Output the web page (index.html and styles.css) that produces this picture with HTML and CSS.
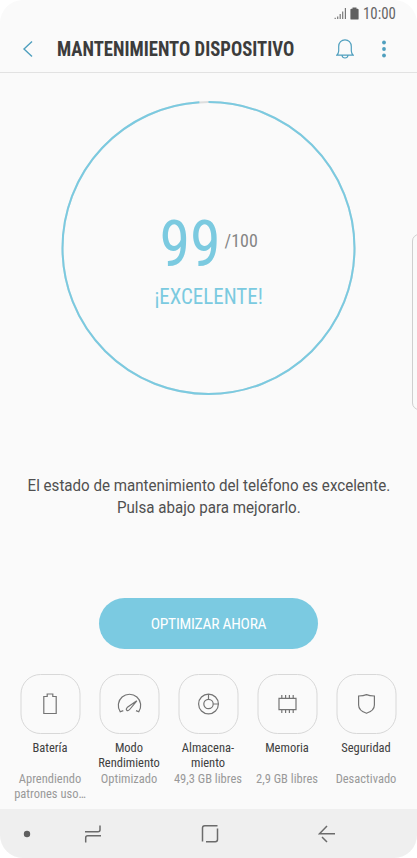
FILE: index.html
```html
<!DOCTYPE html>
<html lang="es">
<head>
<meta charset="utf-8">
<title>Mantenimiento dispositivo</title>
<link rel="stylesheet" href="styles.css">
</head>
<body>
<div class="phone">
  <div class="edge-handle"></div>
  <div class="status">
    <svg class="signal" width="13" height="13" viewBox="0 0 13 13"><path d="M1.2 12v-1.2M3.7 12V9.5M6.2 12V7M8.7 12V4.500M11.400 12V1"/></svg>
    <svg class="cell" width="9" height="13" viewBox="0 0 9 13"><path d="M1.300 1.800H2.500V.4h4v1.400h1.200q.9 0 .9.900v9q0 .9-.9.900H1.300q-.9 0-.9-.9v-9q0-.9.900-.9z"/></svg>
    <span class="time">10:00</span>
  </div>
  <header class="bar">
    <svg class="back" width="12" height="18" viewBox="0 0 12 18"><path d="M10 1.500 2 9l8 7.500"/></svg>
    <h1>MANTENIMIENTO DISPOSITIVO</h1>
    <svg class="bell" width="18" height="20" viewBox="0 0 18 20"><path d="M.8 16.200q1.700-1.500 1.900-4.200V7.500C2.700 3.300 5.500.9 9 .9s6.300 2.400 6.300 6.600V12q.2 2.700 1.900 4.200zM6 16.500q.4 2.500 3 2.500t3-2.500"/></svg>
    <svg class="more" width="6" height="18" viewBox="0 0 6 18"><circle cx="3" cy="2.500" r="1.900"/><circle cx="3" cy="9" r="1.900"/><circle cx="3" cy="15.500" r="1.900"/></svg>
  </header>
  <main>
    <section class="score">
      <svg class="ring" width="295" height="296" viewBox="0 0 295 296"><circle class="track" cx="147.500" cy="148" r="146"/><circle class="value" cx="147.500" cy="148" r="146" pathLength="100" stroke-dasharray="99 1" transform="rotate(-90 147.500 148)"/></svg>
      <div class="points"><span class="number">99</span><span class="total">/100</span></div>
      <div class="rating">¡EXCELENTE!</div>
    </section>
    <p class="summary">El estado de mantenimiento del teléfono es excelente.<br>Pulsa abajo para mejorarlo.</p>
    <button class="optimize">OPTIMIZAR AHORA</button>
    <section class="tiles">
      <div class="tile">
        <div class="icon"><svg width="28" height="28" viewBox="0 0 28 28"><path d="M7.300 6.500h3.400V4h5.600v2.500h3.400v17H7.300z"/></svg></div>
        <div class="name">Batería</div>
        <div class="info">Aprendiendo<br>patrones uso…</div>
      </div>
      <div class="tile">
        <div class="icon"><svg width="28" height="28" viewBox="0 0 28 28"><path d="M7.800 20.600 4.700 21.700A11.200 11.200 0 1 1 23.300 21.700L20.500 20.600M21.300 10.800 12.300 16.900q-2.200 2-1.100 3.300 1.500 1.200 3.400-1.200z"/></svg></div>
        <div class="name">Modo<br>Rendimiento</div>
        <div class="info">Optimizado</div>
      </div>
      <div class="tile">
        <div class="icon"><svg width="28" height="28" viewBox="0 0 28 28"><circle cx="14" cy="14" r="9.900"/><circle cx="14" cy="14" r="4.700"/><path d="M14 4v5.300M18.700 14H24"/></svg></div>
        <div class="name">Almacena-<br>miento</div>
        <div class="info">49,3 GB libres</div>
      </div>
      <div class="tile">
        <div class="icon"><svg width="28" height="28" viewBox="0 0 28 28"><path d="M5.500 8.300h17v11.400h-17zM8.300 8V5M12.100 8V5M15.900 8V5M19.700 8V5M8.300 20v3M12.100 20v3M15.900 20v3M19.700 20v3"/></svg></div>
        <div class="name">Memoria</div>
        <div class="info">2,9 GB libres</div>
      </div>
      <div class="tile">
        <div class="icon"><svg width="28" height="28" viewBox="0 0 28 28"><path d="M14 4.600q-3 1.300-7.900 1.400v9q0 5.700 7.900 8.300 7.900-2.600 7.900-8.300V6Q17 5.900 14 4.600z"/></svg></div>
        <div class="name">Seguridad</div>
        <div class="info">Desactivado</div>
      </div>
    </section>
  </main>
  <nav class="keys">
    <svg width="8" height="8" viewBox="0 0 8 8"><circle cx="4" cy="4" r="3.200"/></svg>
    <svg class="line" width="18" height="20" viewBox="0 0 18 20"><path d="M1 7.800h13q2 0 2-2V1.500M1.700 18.500v-4.700q0-2 2-2H17"/></svg>
    <svg class="line" width="18" height="20" viewBox="0 0 18 20"><path d="M1.500 17.500V4q0-2.200 2.200-2.200H16.500M16.500 4.500V15.500q0 2.200-2.200 2.200H5"/></svg>
    <svg class="line" width="18" height="20" viewBox="0 0 18 20"><path d="M17 9.800H1.500L9 2M4 13l5 5"/></svg>
  </nav>
</div>
</body>
</html>
```
FILE: styles.css
```css
* { box-sizing: border-box; }
body { margin: 0; background: #fff; font-family: "Roboto Condensed", Roboto, "Liberation Sans", sans-serif; font-stretch: 75%; }
svg { display: block; flex: none; fill: none; }
.phone { position: relative; width: 417px; height: 858px; display: flex; flex-direction: column; overflow: hidden; border-radius: 23px; background: #fafafa; color: #404040; }
.edge-handle { position: absolute; left: 412px; top: 234px; width: 20px; height: 176px; border: 1px solid #cfcfcf; border-radius: 7px; }
.status { height: 26px; display: flex; align-items: center; padding-left: 334px; color: #656565; }
.signal { stroke: #777; stroke-width: 1.2; }
.cell { fill: #606060; margin-left: 3px; }
.time { font-size: 16.500px; line-height: 18px; margin: 1px 0 0 4px; transform: scaleX(.9); transform-origin: left; }
.bar { height: 47px; display: flex; align-items: center; border-bottom: 1px solid #e2e2e2; padding: 0 30px 0 22px; }
.back, .bell { stroke: #4f9fbe; stroke-width: 1.4; }
.bell { stroke-width: 1.2; }
.more { fill: #4f9fbe; margin-left: 27px; }
h1 { flex: 1; margin: 2px 0 0 23px; font-size: 19.500px; line-height: 22px; white-space: nowrap; color: #3c3c3c; transform: scaleX(.959); transform-origin: left; }
main { flex: 1; display: flex; flex-direction: column; align-items: center; }
.score { position: relative; width: 295px; height: 296px; margin-top: 27px; color: #7bcae0; display: flex; flex-direction: column; align-items: center; }
.ring { position: absolute; inset: 0; }
.ring circle { stroke-width: 2; }
.track { stroke: #dedede; }
.value { stroke: #7bcae0; }
.points { display: flex; height: 76px; margin-top: 104px; }
.number { font-size: 64px; line-height: 76px; transform: translate(.5px, 3px) scaleX(.97); }
.total { font-size: 18.500px; line-height: 22px; margin: 26px 0 0 3px; color: #858585; transform: scaleX(.97); }
.rating { font-size: 21.500px; line-height: 26px; margin-top: 4px; transform: scaleX(.975); }
.summary { margin: 79px 0 0; font-size: 16px; line-height: 22px; font-stretch: 100%; font-family: Roboto, sans-serif; text-align: center; color: #505050; transform: scaleX(.945); }
.optimize { width: 219px; height: 51px; margin-top: 79px; border: 0; border-radius: 26px; background: #7bcae1; color: #fff; font: inherit; font-size: 15.500px; line-height: 20px; padding-top: 2px; letter-spacing: -.25px; }
.tiles { display: grid; grid-template-columns: repeat(5, 79px); margin-top: 25px; transform: translateX(-.5px); }
.tile { text-align: center; white-space: nowrap; font-size: 12.500px; line-height: 15px; }
.icon { width: 60px; height: 60px; margin: 0 auto; display: grid; place-items: center; border: 1px solid #d8d8d8; border-radius: 20px; }
.icon svg { stroke: #747474; stroke-width: 1.200; }
.name { height: 30px; margin-top: 6px; }
.info { margin-top: 1px; color: #999; }
.keys { height: 49px; display: flex; align-items: center; background: #efefef; padding-left: 23px; }
.keys svg { fill: #606060; }
.keys .line { fill: none; stroke: #6b6b6b; stroke-width: 1.500; margin-left: 53px; }
.keys .line + .line { margin-left: 99px; }
```
